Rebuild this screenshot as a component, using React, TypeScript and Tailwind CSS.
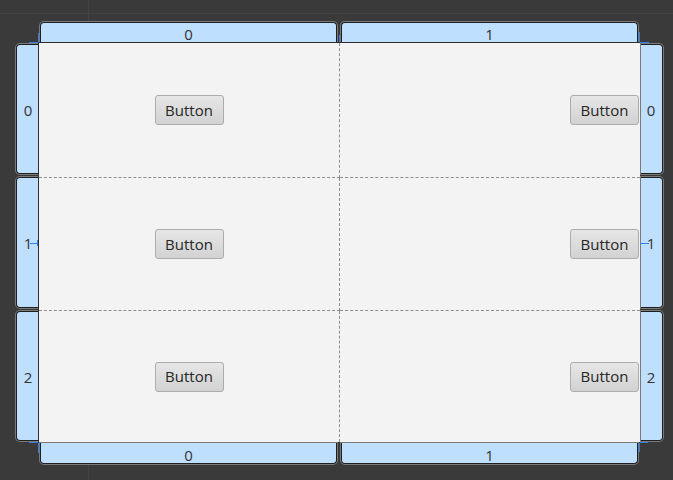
import React from "react";

const seg = "bg-[#bfdfff] border border-[#1f1f1f] ring-1 ring-[#7a7a7a] flex items-center justify-center text-[15px] text-[#333] leading-none";

const Btn = () => (
  <button className="h-[30px] w-[69px] rounded-[3px] border border-[#acacac] bg-[linear-gradient(#e6e6e6,#d2d2d2)] text-[15px] text-[#262626] leading-none">
    Button
  </button>
);

const Mark = ({ className }: { className: string }) => <div className={"absolute bg-[#2f80ec] " + className} />;

export default function App() {
  const rows = [0, 1, 2];
  return (
    <div
      className="relative w-[673px] h-[480px] bg-[#3a3a3a] bg-[linear-gradient(90deg,transparent_88px,#434343_88px,#434343_89px,transparent_89px),linear-gradient(transparent_13px,#434343_13px,#434343_14px,transparent_14px)] pl-[16px] pt-[22px] overflow-hidden"
      style={{ fontFamily: '"Open Sans", "Noto Sans", sans-serif' }}
    >
      <div className="grid grid-cols-[22px_603px_22px] grid-rows-[20px_401px_21px]">
        <div />
        {/* top header */}
        <div className="flex gap-[4px] pl-[2px] pr-[3px]">
          <div className={seg + " flex-1 rounded-t-[4px] border-b-0 pt-[3px]"}>0</div>
          <div className={seg + " flex-1 rounded-t-[4px] border-b-0 pt-[3px]"}>1</div>
        </div>
        <div />

        {/* left header */}
        <div className="flex flex-col gap-[3px] py-[2px]">
          {rows.map((r) => (
            <div key={r} className={seg + " flex-1 rounded-l-[4px] border-r-0 pl-[1px] pt-[3px]"}>{r}</div>
          ))}
        </div>

        {/* grid */}
        <div className="grid grid-cols-[301px_1fr] grid-rows-[135px_133px_1fr] bg-[#f3f3f3] border border-[#2e2e2e]">
          {rows.map((r) => (
            <React.Fragment key={r}>
              <div className={"flex items-center justify-center border-r border-dashed border-[#8e8e8e] " + (r < 2 ? "border-b" : "")}>
                <Btn />
              </div>
              <div className={"flex items-center justify-end pr-[1px] border-dashed border-[#8e8e8e] " + (r < 2 ? "border-b" : "")}>
                <Btn />
              </div>
            </React.Fragment>
          ))}
        </div>

        {/* right header */}
        <div className="flex flex-col gap-[3px] py-[2px]">
          {rows.map((r) => (
            <div key={r} className={seg + " flex-1 rounded-r-[4px] border-l-0 pr-[1px] pt-[3px]"}>{r}</div>
          ))}
        </div>

        <div />
        {/* bottom header */}
        <div className="flex gap-[4px] pl-[2px] pr-[3px]">
          <div className={seg + " flex-1 rounded-b-[4px] border-t-0 pt-[5px]"}>0</div>
          <div className={seg + " flex-1 rounded-b-[4px] border-t-0 pt-[5px]"}>1</div>
        </div>
        <div />
      </div>

      <Mark className="left-[38px] top-[33px] w-[1px] h-[9px]" />
      <Mark className="left-[29px] top-[42px] w-[9px] h-[1px]" />
      <Mark className="left-[639px] top-[32px] w-[1px] h-[10px]" />
      <Mark className="left-[640px] top-[42px] w-[9px] h-[1px]" />
      <Mark className="left-[38px] top-[443px] w-[1px] h-[10px]" />
      <Mark className="left-[29px] top-[442px] w-[9px] h-[1px]" />
      <Mark className="left-[639px] top-[443px] w-[1px] h-[9px]" />
      <Mark className="left-[640px] top-[442px] w-[8px] h-[1px]" />
      <Mark className="left-[339px] top-[35px] w-[1px] h-[7px]" />
      <Mark className="left-[30px] top-[243px] w-[8px] h-[1px]" />
      <Mark className="left-[37px] top-[240px] w-[1px] h-[6px]" />
      <Mark className="left-[640px] top-[243px] w-[9px] h-[1px]" />
    </div>
  );
}
